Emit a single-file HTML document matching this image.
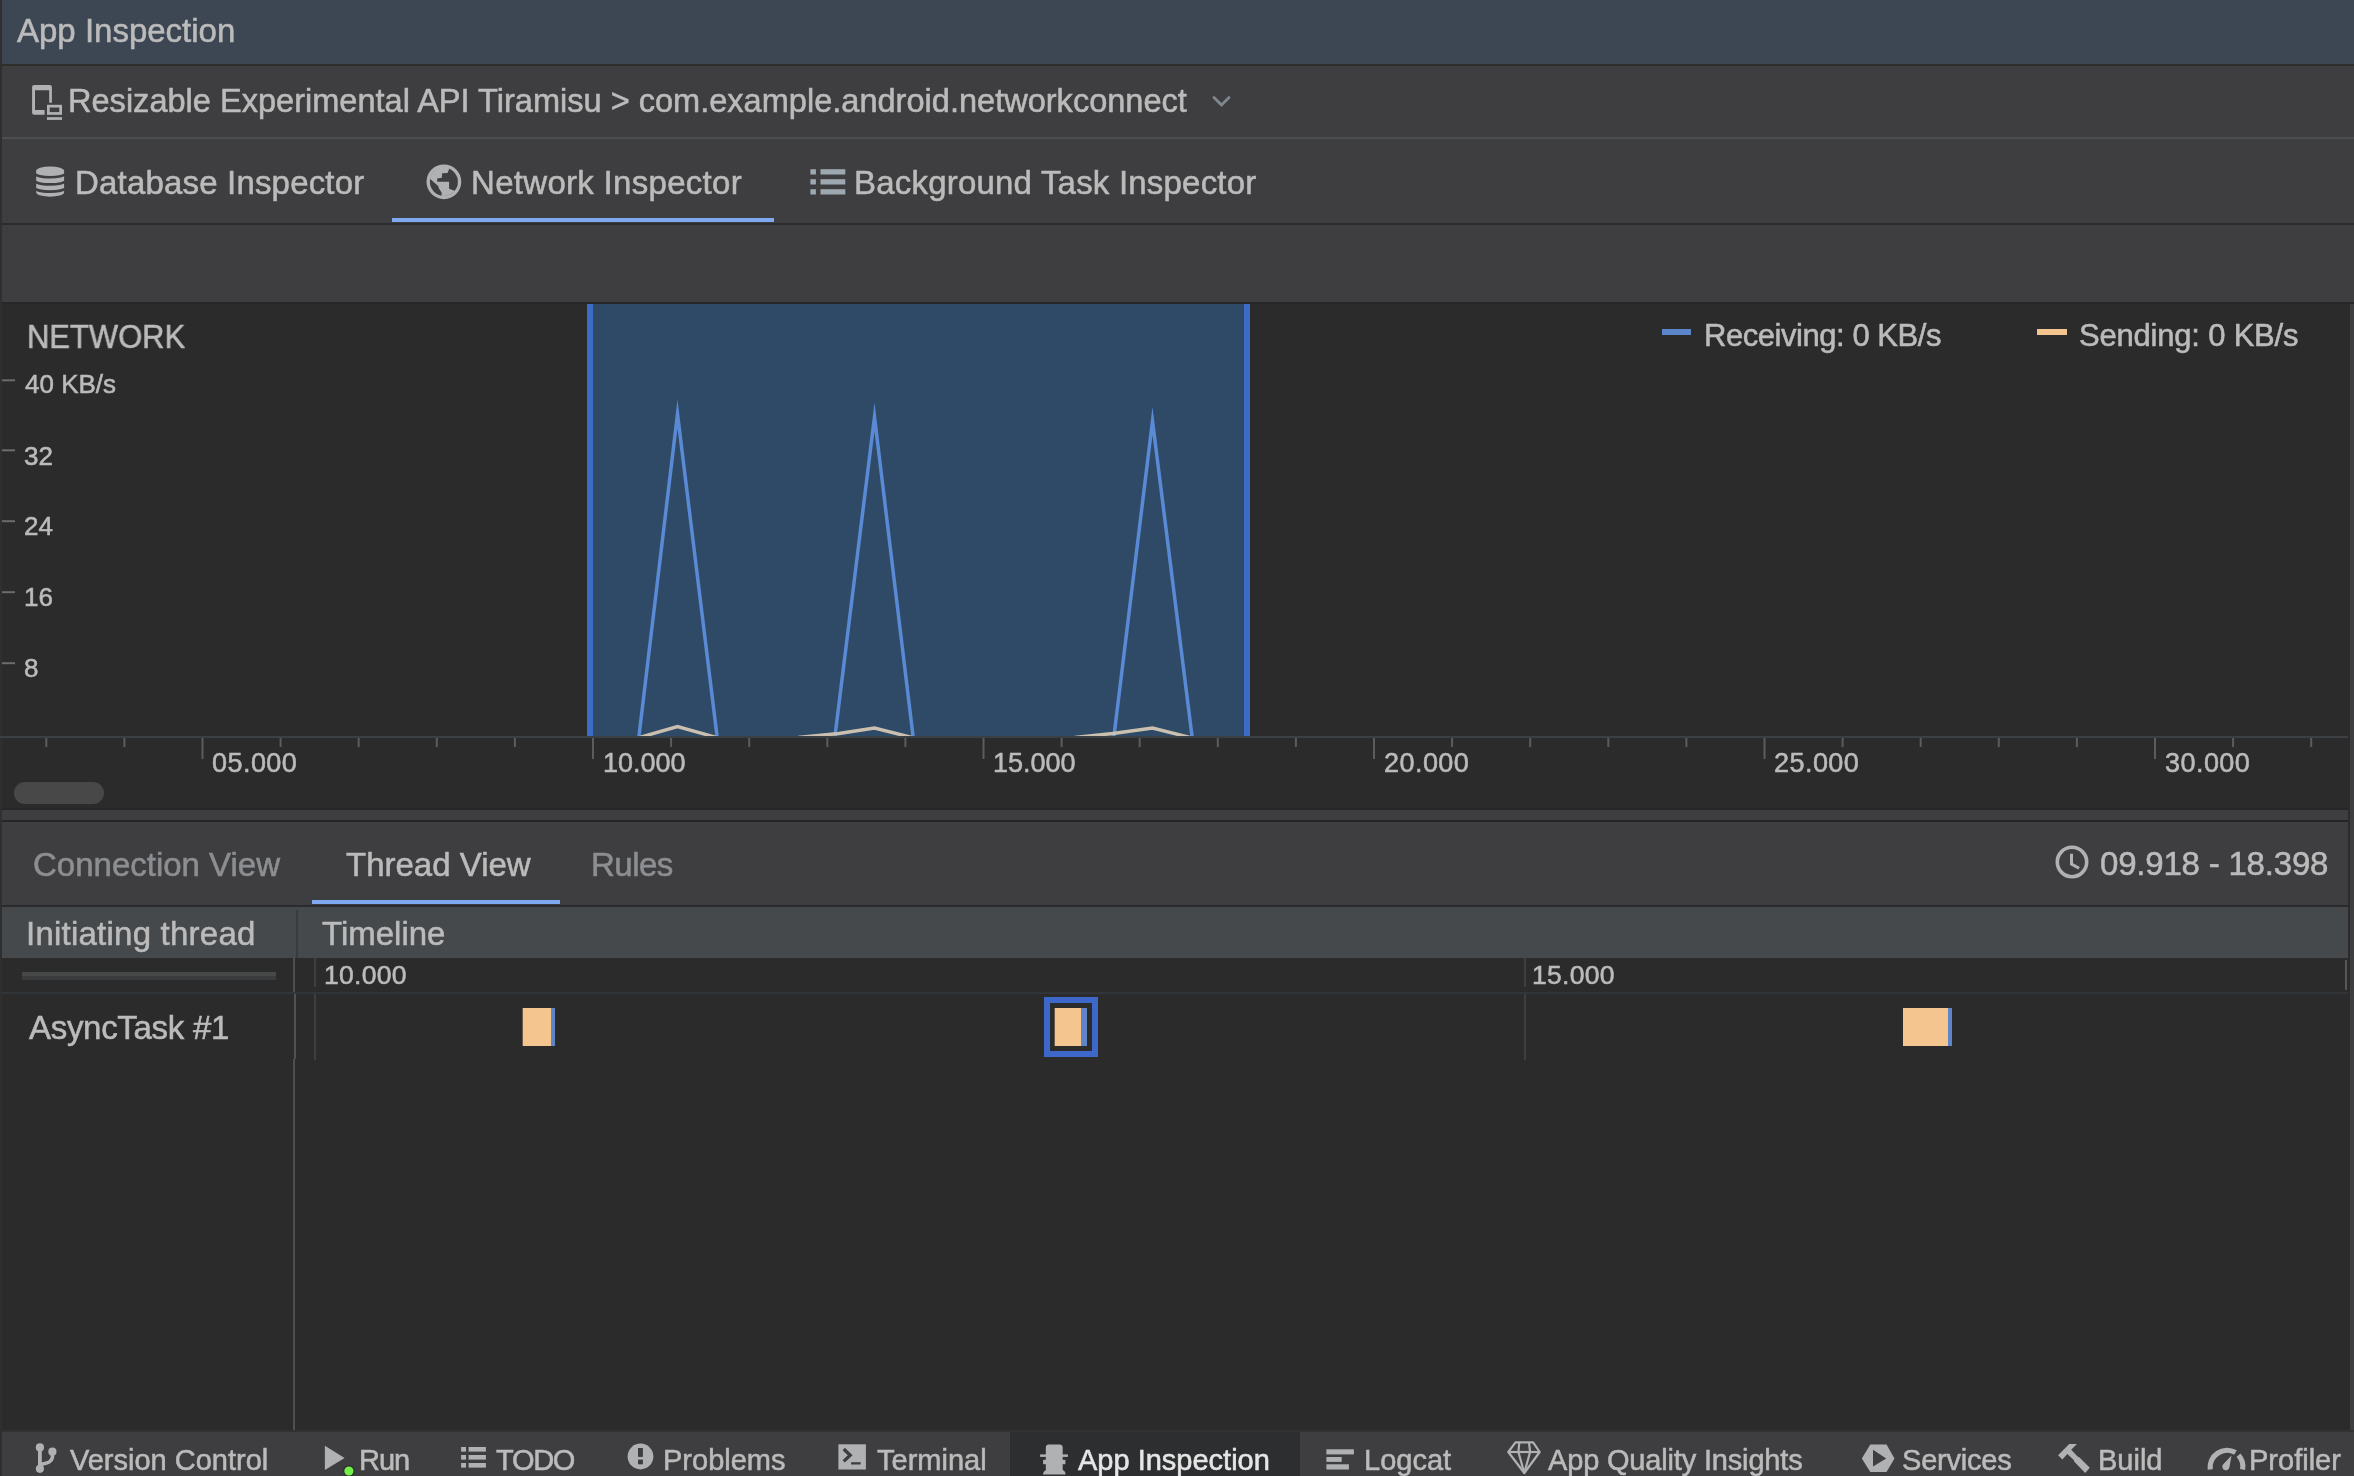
<!DOCTYPE html>
<html><head><meta charset="utf-8"><title>App Inspection</title>
<style>
html,body{margin:0;padding:0;width:2354px;height:1476px;overflow:hidden;background:#3e3e40}
.b{position:absolute}
.t{position:absolute;font-family:"Liberation Sans",sans-serif;line-height:1;white-space:pre;will-change:transform;-webkit-text-stroke:0.55px currentColor}
</style></head><body>
<div class="b" style="left:0px;top:0px;width:2354px;height:1476px;background:#3e3e40;"></div>
<div class="b" style="left:0px;top:0px;width:2354px;height:64px;background:#3d4754;"></div>
<div class="b" style="left:0px;top:64px;width:2354px;height:2px;background:#2f2e2d;"></div>
<div class="b" style="left:0px;top:137px;width:2354px;height:2px;background:#4b4e50;"></div>
<div class="b" style="left:0px;top:223px;width:2354px;height:2px;background:#2a2b2d;"></div>
<div class="b" style="left:392px;top:218px;width:382px;height:4px;background:#7ea8ef;"></div>
<div class="b" style="left:0px;top:302px;width:2354px;height:2px;background:#262729;"></div>
<div class="b" style="left:0px;top:304px;width:2348px;height:506px;background:#2b2b2b;"></div>
<div class="b" style="left:2348px;top:304px;width:2px;height:1128px;background:#2b2b2b;"></div>
<div class="b" style="left:0px;top:808px;width:2348px;height:2px;background:#262626;"></div>
<div class="b" style="left:0px;top:820px;width:2348px;height:2px;background:#252525;"></div>
<div class="b" style="left:312px;top:900px;width:248px;height:4px;background:#7ea8ef;"></div>
<div class="b" style="left:0px;top:905px;width:2348px;height:2px;background:#2a2b2d;"></div>
<div class="b" style="left:0px;top:907px;width:2348px;height:51px;background:#45494c;"></div>
<div class="b" style="left:296px;top:910px;width:2px;height:48px;background:#393c3e;"></div>
<div class="b" style="left:0px;top:958px;width:2348px;height:472px;background:#2b2b2b;"></div>
<div class="b" style="left:0px;top:992px;width:2348px;height:2px;background:#323538;"></div>
<div class="b" style="left:22px;top:972px;width:254px;height:4px;background:#474848;"></div>
<div class="b" style="left:22px;top:976px;width:254px;height:4px;background:#3b3c3d;"></div>
<div class="b" style="left:293px;top:958px;width:2px;height:34px;background:#4d4f51;"></div>
<div class="b" style="left:294px;top:994px;width:2px;height:65px;background:#505254;"></div>
<div class="b" style="left:293px;top:1059px;width:2px;height:371px;background:#4d4f51;"></div>
<div class="b" style="left:314px;top:958px;width:2px;height:29px;background:#3c3e40;"></div>
<div class="b" style="left:314px;top:994px;width:2px;height:66px;background:#3c3e40;"></div>
<div class="b" style="left:1524px;top:958px;width:2px;height:29px;background:#3c3e40;"></div>
<div class="b" style="left:1524px;top:994px;width:2px;height:66px;background:#3c3e40;"></div>
<div class="b" style="left:2345px;top:960px;width:2px;height:30px;background:#55585a;"></div>
<div class="b" style="left:0px;top:1430px;width:2354px;height:2px;background:#323232;"></div>
<div class="b" style="left:0px;top:1432px;width:2354px;height:44px;background:#3e3e40;"></div>
<div class="b" style="left:1010px;top:1432px;width:290px;height:44px;background:#2d2e30;"></div>
<div class="b" style="left:0px;top:0px;width:2px;height:1476px;background:#2f2f2f;"></div>
<svg class="b" style="left:0;top:0" width="2354" height="1476" viewBox="0 0 2354 1476">
<rect x="587" y="304" width="663" height="432" fill="#2e4a66"/>
<rect x="587" y="304" width="6" height="432" fill="#3e6bc6"/>
<rect x="1244" y="304" width="6" height="432" fill="#3e6bc6"/>
<defs><clipPath id="cclip"><rect x="0" y="304" width="2348" height="432"/></clipPath></defs><g clip-path="url(#cclip)">
<polyline points="638.5,740 677.5,414 717.5,740" fill="none" stroke="#5a8ad5" stroke-width="3.5" stroke-linejoin="miter" stroke-miterlimit="40"/>
<polyline points="834.5,740 874.5,417 913.5,740" fill="none" stroke="#5a8ad5" stroke-width="3.5" stroke-linejoin="miter" stroke-miterlimit="40"/>
<polyline points="1113.5,740 1152.5,421 1192.5,740" fill="none" stroke="#5a8ad5" stroke-width="3.5" stroke-linejoin="miter" stroke-miterlimit="40"/>
<polyline points="636,738.5 677.5,726.5 720,738.5" fill="none" stroke="#cbbfb0" stroke-width="3.4"/>
<polyline points="798,737.5 839,733.5 874.5,728 916,738.5" fill="none" stroke="#cbbfb0" stroke-width="3.4"/>
<polyline points="1075,737.5 1113,733.5 1152.5,728 1194,738.5" fill="none" stroke="#cbbfb0" stroke-width="3.4"/>
</g>
<rect x="0" y="736" width="2348" height="2" fill="#3d4042"/>
<rect x="45.3" y="738" width="2" height="9" fill="#5a5c5e"/>
<rect x="123.4" y="738" width="2" height="9" fill="#5a5c5e"/>
<rect x="201.5" y="738" width="2" height="21" fill="#5a5c5e"/>
<rect x="279.6" y="738" width="2" height="9" fill="#5a5c5e"/>
<rect x="357.7" y="738" width="2" height="9" fill="#5a5c5e"/>
<rect x="435.8" y="738" width="2" height="9" fill="#5a5c5e"/>
<rect x="513.9" y="738" width="2" height="9" fill="#5a5c5e"/>
<rect x="592.0" y="738" width="2" height="21" fill="#5a5c5e"/>
<rect x="670.1" y="738" width="2" height="9" fill="#5a5c5e"/>
<rect x="748.2" y="738" width="2" height="9" fill="#5a5c5e"/>
<rect x="826.3" y="738" width="2" height="9" fill="#5a5c5e"/>
<rect x="904.4" y="738" width="2" height="9" fill="#5a5c5e"/>
<rect x="982.5" y="738" width="2" height="21" fill="#5a5c5e"/>
<rect x="1060.6" y="738" width="2" height="9" fill="#5a5c5e"/>
<rect x="1138.7" y="738" width="2" height="9" fill="#5a5c5e"/>
<rect x="1216.8" y="738" width="2" height="9" fill="#5a5c5e"/>
<rect x="1294.9" y="738" width="2" height="9" fill="#5a5c5e"/>
<rect x="1373.0" y="738" width="2" height="21" fill="#5a5c5e"/>
<rect x="1451.1" y="738" width="2" height="9" fill="#5a5c5e"/>
<rect x="1529.2" y="738" width="2" height="9" fill="#5a5c5e"/>
<rect x="1607.3" y="738" width="2" height="9" fill="#5a5c5e"/>
<rect x="1685.4" y="738" width="2" height="9" fill="#5a5c5e"/>
<rect x="1763.5" y="738" width="2" height="21" fill="#5a5c5e"/>
<rect x="1841.6" y="738" width="2" height="9" fill="#5a5c5e"/>
<rect x="1919.7" y="738" width="2" height="9" fill="#5a5c5e"/>
<rect x="1997.8" y="738" width="2" height="9" fill="#5a5c5e"/>
<rect x="2075.9" y="738" width="2" height="9" fill="#5a5c5e"/>
<rect x="2154.0" y="738" width="2" height="21" fill="#5a5c5e"/>
<rect x="2232.1" y="738" width="2" height="9" fill="#5a5c5e"/>
<rect x="2310.2" y="738" width="2" height="9" fill="#5a5c5e"/>
<rect x="2" y="379.3" width="13" height="2" fill="#6a6c6e"/>
<rect x="2" y="449.3" width="13" height="2" fill="#6a6c6e"/>
<rect x="2" y="520.2" width="13" height="2" fill="#6a6c6e"/>
<rect x="2" y="591.2" width="13" height="2" fill="#6a6c6e"/>
<rect x="2" y="662.2" width="13" height="2" fill="#6a6c6e"/>
<rect x="1662" y="329" width="29" height="6" fill="#5b86c9"/>
<rect x="2037" y="329" width="30" height="6" fill="#f4c48f"/>
<rect x="14" y="782" width="90" height="22" rx="11" fill="#484848"/>
<rect x="522.7" y="1008" width="28.3" height="38" fill="#f5c58f"/><rect x="551" y="1008" width="4" height="38" fill="#5f85c8"/>
<rect x="1047" y="1000" width="48" height="54" fill="none" stroke="#3d68c9" stroke-width="6"/>
<rect x="1054.7" y="1008" width="26.3" height="38" fill="#f5c58f"/><rect x="1081" y="1008" width="6" height="38" fill="#5f85c8"/>
<rect x="1903" y="1008" width="45" height="38" fill="#f5c58f"/><rect x="1948" y="1008" width="4" height="38" fill="#5f85c8"/>
</svg>
<svg class="b" style="left:0;top:0" width="2354" height="1476" viewBox="0 0 2354 1476">
<defs><clipPath id="gclip"><circle cx="443.9" cy="181.8" r="14"/></clipPath></defs>
<g fill="#afb1b3">
<!-- device icon -->
<path d="M34.1,84.9 H49.9 A2,2 0 0 1 51.9,86.9 V102.7 H49.2 V90.2 H35 V109.9 H44.6 V114.8 H34.1 A2,2 0 0 1 32.1,112.8 V86.9 A2,2 0 0 1 34.1,84.9 Z"/>
<rect x="48.35" y="106.15" width="12.3" height="7.3" fill="none" stroke="#afb1b3" stroke-width="2.7"/>
<rect x="47" y="117.2" width="15" height="2.7"/>
<!-- database icon -->
<path d="M36.2,171 V192.8 A14,4.2 0 0 0 64.1,192.8 V171 Z"/>
<ellipse cx="50.15" cy="170.9" rx="14" ry="4.3"/>
</g>
<g fill="none" stroke="#3e3e40" stroke-width="2.6">
<path d="M35.5,173.8 A14.6,3.4 0 0 0 64.8,173.8"/>
<path d="M35.5,181 A14.6,3.4 0 0 0 64.8,181"/>
<path d="M35.5,188.2 A14.6,3.4 0 0 0 64.8,188.2"/>
</g>
<!-- globe -->
<circle cx="443.9" cy="181.8" r="15.65" fill="none" stroke="#afb1b3" stroke-width="3.5"/>
<circle cx="443.9" cy="181.8" r="14.2" fill="#afb1b3"/>
<g clip-path="url(#gclip)" fill="#3e3e40">
<path d="M449.1,169.2 L447.5,172.9 L442.2,173.3 L441.8,177.8 L437.2,178.6 L437.2,181.8 L449.1,181.8 L449.1,188.7 L454.4,190.8 L475,195 L475,160 L449,160 Z"/>
<path d="M430.2,179 L438.4,186.3 L438.6,187.9 L441.6,192.4 L441.6,196.5 L430,205 L415,190 L415,175 Z"/>
</g>
<!-- list icon bg task -->
<g fill="#9ea8b1">
<rect x="810.4" y="169.2" width="5.5" height="5.3"/><rect x="820.5" y="169.2" width="24.8" height="5.3"/>
<rect x="810.4" y="179.2" width="5.5" height="5.3"/><rect x="820.5" y="179.2" width="24.8" height="5.3"/>
<rect x="810.4" y="189.2" width="5.5" height="5.3"/><rect x="820.5" y="189.2" width="24.8" height="5.3"/>
</g>
<!-- chevron -->
<polyline points="1214,97.6 1221.5,105 1229,97.6" fill="none" stroke="#7f878f" stroke-width="2.8" stroke-linecap="round" stroke-linejoin="miter"/>
<!-- clock -->
<circle cx="2072" cy="862" r="14.7" fill="none" stroke="#afb1b3" stroke-width="3.6"/>
<polyline points="2071.5,853.7 2071.5,864 2079.1,868.2" fill="none" stroke="#afb1b3" stroke-width="3"/>
<!-- status bar icons -->
<g fill="#afb1b3">
<!-- version control -->
<circle cx="39.9" cy="1447.4" r="4.1"/><circle cx="52.4" cy="1451.7" r="4.1"/><circle cx="39.9" cy="1468.8" r="4.1"/>
<rect x="38" y="1447" width="3.8" height="21"/>
<path d="M39.9,1464.8 C45,1463 51,1463.5 52.4,1457.5 V1451.7" fill="none" stroke="#afb1b3" stroke-width="3.6"/>
<!-- run -->
<polygon points="324.9,1445.8 344.6,1458 324.9,1470.1"/>
<!-- todo -->
<rect x="461.1" y="1447" width="4.9" height="4.6"/><rect x="468.6" y="1447" width="17.3" height="4.6"/>
<rect x="461.1" y="1455" width="4.9" height="4.6"/><rect x="468.6" y="1455" width="17.3" height="4.6"/>
<rect x="461.1" y="1463" width="4.9" height="4.6"/><rect x="468.6" y="1463" width="17.3" height="4.6"/>
<!-- problems -->
<circle cx="640.5" cy="1456.5" r="12.9"/>
<!-- terminal -->
<rect x="838.4" y="1444.3" width="27.5" height="25.2"/>
<!-- app inspection spy -->
<path d="M1049,1444.4 H1059.5 A3.2,3.2 0 0 1 1062.7,1447.6 V1470 H1045.8 V1447.6 A3.2,3.2 0 0 1 1049,1444.4 Z"/>
<rect x="1040.1" y="1454.4" width="27.8" height="2.5"/>
<rect x="1043.1" y="1459.8" width="22.3" height="4.4"/>
<path d="M1047,1469.5 H1062 Q1065.6,1471 1065.6,1474.5 H1043 Q1043,1471 1047,1469.5 Z"/>
<!-- logcat -->
<rect x="1326.4" y="1449.3" width="27.5" height="5.1"/>
<rect x="1326.4" y="1457" width="15.3" height="4.9"/>
<rect x="1326.4" y="1464.3" width="22.5" height="5.2"/>
<!-- services -->
<polygon points="1870.3,1444.5 1886.5,1444.5 1894.5,1458.4 1886.5,1471.9 1870.3,1471.9 1861.8,1458.4"/>
<!-- hammer -->
<polygon points="2058.1,1455.2 2069.2,1444.1 2076.9,1443.9 2071.2,1449.8 2077.6,1456.6 2079.5,1457.4 2089.8,1467.7 2085.2,1472.9 2074.3,1461.7 2073.8,1460.1 2067.3,1454 2062.4,1459.6"/>
</g>
<!-- problems exclamation -->
<rect x="638" y="1448" width="4.9" height="8.9" fill="#3e3e40"/>
<rect x="638" y="1459.6" width="4.9" height="4.7" fill="#3e3e40"/>
<!-- terminal glyph -->
<polyline points="843.7,1449 850.2,1455.2 843.7,1461.4" fill="none" stroke="#3e3e40" stroke-width="3.3"/>
<rect x="851.1" y="1462.2" width="9.6" height="2.3" fill="#3e3e40"/>
<!-- services play -->
<polygon points="1873,1449.8 1886.2,1458.4 1873,1466.4" fill="#3e3e40"/>
<!-- diamond -->
<g fill="none" stroke="#afb1b3" stroke-width="2.2" stroke-linejoin="round">
<polygon points="1515.5,1442.4 1533.1,1442.4 1539.7,1452 1524.3,1473 1508.3,1452"/>
<line x1="1508.3" y1="1452" x2="1539.7" y2="1452"/>
<polyline points="1519.3,1442.4 1518.4,1452 1524.3,1473 1530.1,1452 1529,1442.4"/>
</g>
<!-- profiler gauge -->
<path d="M2210.2,1469.5 A17,17 0 0 1 2235.5,1452.6" fill="none" stroke="#afb1b3" stroke-width="5.2"/>
<path d="M2238.5,1455.2 A17,17 0 0 1 2242.6,1469.5" fill="none" stroke="#afb1b3" stroke-width="5.2"/>
<path d="M2231.5,1455.5 L2229.5,1467 A3.6,3.6 0 1 1 2223,1464.5 Z" fill="#afb1b3"/>
<!-- green dot -->
<circle cx="348.9" cy="1471" r="5.8" fill="#2b2d2e"/>
<circle cx="348.9" cy="1471" r="4.6" fill="#74f04a"/>
</svg>

<div class="t" id="t_appinsp" style="left:16.8px;top:14.3px;font-size:33px;color:#bbbbbb;">App Inspection</div>
<div class="t" id="t_device" style="left:68.1px;top:85.4px;font-size:32.55px;color:#bbbbbb;">Resizable Experimental API Tiramisu &gt; com.example.android.networkconnect</div>
<div class="t" id="t_db" style="left:74.7px;top:166.3px;font-size:33px;color:#bbbbbb;letter-spacing:0.18px;">Database Inspector</div>
<div class="t" id="t_net" style="left:470.6px;top:166.3px;font-size:33px;color:#bbbbbb;letter-spacing:0.3px;">Network Inspector</div>
<div class="t" id="t_bg" style="left:853.7px;top:166.3px;font-size:33px;color:#bbbbbb;letter-spacing:0.2px;">Background Task Inspector</div>
<div class="t" id="t_network" style="left:26.9px;top:320.3px;font-size:33px;color:#bbbbbb;transform:scaleX(0.9376);transform-origin:0 0;">NETWORK</div>
<div class="t" id="t_40" style="left:25.0px;top:370.8px;font-size:26px;color:#bbbbbb;">40 KB/s</div>
<div class="t" id="t_y32" style="left:23.9px;top:442.5px;font-size:26px;color:#bbbbbb;">32</div>
<div class="t" id="t_y24" style="left:23.9px;top:513.4px;font-size:26px;color:#bbbbbb;">24</div>
<div class="t" id="t_y16" style="left:23.9px;top:584.3px;font-size:26px;color:#bbbbbb;">16</div>
<div class="t" id="t_y8" style="left:23.9px;top:655.2px;font-size:26px;color:#bbbbbb;">8</div>
<div class="t" id="t_x0" style="left:212.1px;top:749.6px;font-size:27px;color:#bbbbbb;letter-spacing:0.45px;">05.000</div>
<div class="t" id="t_x1" style="left:602.6px;top:749.6px;font-size:27px;color:#bbbbbb;">10.000</div>
<div class="t" id="t_x2" style="left:993.1px;top:749.6px;font-size:27px;color:#bbbbbb;">15.000</div>
<div class="t" id="t_x3" style="left:1383.6px;top:749.6px;font-size:27px;color:#bbbbbb;letter-spacing:0.45px;">20.000</div>
<div class="t" id="t_x4" style="left:1774.1px;top:749.6px;font-size:27px;color:#bbbbbb;letter-spacing:0.45px;">25.000</div>
<div class="t" id="t_x5" style="left:2164.6px;top:749.6px;font-size:27px;color:#bbbbbb;letter-spacing:0.45px;">30.000</div>
<div class="t" id="t_recv" style="left:1704.0px;top:319.6px;font-size:31px;color:#bbbbbb;letter-spacing:-0.45px;">Receiving: 0 KB/s</div>
<div class="t" id="t_send" style="left:2079.0px;top:319.6px;font-size:31px;color:#bbbbbb;letter-spacing:-0.2px;">Sending: 0 KB/s</div>
<div class="t" id="t_conn" style="left:33.0px;top:847.9px;font-size:33px;color:#8c8e91;">Connection View</div>
<div class="t" id="t_thread" style="left:345.8px;top:848.3px;font-size:33px;color:#bbbbbb;">Thread View</div>
<div class="t" id="t_rules" style="left:591.3px;top:848.3px;font-size:33px;color:#8c8e91;letter-spacing:-0.5px;">Rules</div>
<div class="t" id="t_range" style="left:2100.0px;top:846.7px;font-size:33px;color:#bbbbbb;letter-spacing:-0.2px;">09.918 - 18.398</div>
<div class="t" id="t_init" style="left:26.3px;top:916.8px;font-size:33px;color:#bbbbbb;letter-spacing:0.23px;">Initiating thread</div>
<div class="t" id="t_timeline" style="left:322.4px;top:916.8px;font-size:33px;color:#bbbbbb;">Timeline</div>
<div class="t" id="t_r10" style="left:324.4px;top:961.7px;font-size:26.5px;color:#bbbbbb;letter-spacing:0.3px;">10.000</div>
<div class="t" id="t_r15" style="left:1532.0px;top:961.7px;font-size:26.5px;color:#bbbbbb;letter-spacing:0.3px;">15.000</div>
<div class="t" id="t_async" style="left:28.9px;top:1010.6px;font-size:33px;color:#bbbbbb;letter-spacing:-0.3px;">AsyncTask #1</div>
<div class="t" id="s_vc" style="left:70.0px;top:1445.5px;font-size:29px;color:#bbbbbb;">Version Control</div>
<div class="t" id="s_run" style="left:359.0px;top:1445.5px;font-size:29px;color:#bbbbbb;letter-spacing:-1px;">Run</div>
<div class="t" id="s_todo" style="left:496.2px;top:1445.5px;font-size:29px;color:#bbbbbb;letter-spacing:-1.3px;">TODO</div>
<div class="t" id="s_prob" style="left:662.8px;top:1445.5px;font-size:29px;color:#bbbbbb;">Problems</div>
<div class="t" id="s_term" style="left:877.0px;top:1445.5px;font-size:29px;color:#bbbbbb;">Terminal</div>
<div class="t" id="s_ai" style="left:1078.0px;top:1445.5px;font-size:29px;color:#e6e6e6;">App Inspection</div>
<div class="t" id="s_log" style="left:1364.3px;top:1445.5px;font-size:29px;color:#bbbbbb;">Logcat</div>
<div class="t" id="s_aqi" style="left:1547.7px;top:1445.5px;font-size:29px;color:#bbbbbb;letter-spacing:-0.17px;">App Quality Insights</div>
<div class="t" id="s_srv" style="left:1902.3px;top:1445.5px;font-size:29px;color:#bbbbbb;letter-spacing:-0.2px;">Services</div>
<div class="t" id="s_build" style="left:2098.4px;top:1445.5px;font-size:29px;color:#bbbbbb;">Build</div>
<div class="t" id="s_prof" style="left:2249.2px;top:1445.5px;font-size:29px;color:#bbbbbb;">Profiler</div>
</body></html>
